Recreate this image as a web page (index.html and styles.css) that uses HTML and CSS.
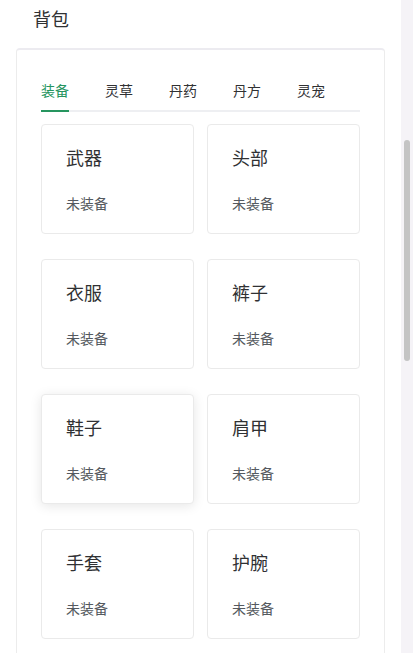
FILE: index.html
```html
<!DOCTYPE html>
<html lang="zh">
<head>
<meta charset="utf-8">
<title>背包</title>
<link rel="stylesheet" href="styles.css">
</head>
<body>
<div class="page">
  <main class="main">
    <h1 class="title">背包</h1>
    <section class="panel">
      <nav class="tabs">
        <span class="tab active">装备</span>
        <span class="tab">灵草</span>
        <span class="tab">丹药</span>
        <span class="tab">丹方</span>
        <span class="tab">灵宠</span>
      </nav>
      <div class="grid">
        <div class="card"><div class="card-name">武器</div><div class="card-state">未装备</div></div>
        <div class="card"><div class="card-name">头部</div><div class="card-state">未装备</div></div>
        <div class="card"><div class="card-name">衣服</div><div class="card-state">未装备</div></div>
        <div class="card"><div class="card-name">裤子</div><div class="card-state">未装备</div></div>
        <div class="card hover"><div class="card-name">鞋子</div><div class="card-state">未装备</div></div>
        <div class="card"><div class="card-name">肩甲</div><div class="card-state">未装备</div></div>
        <div class="card"><div class="card-name">手套</div><div class="card-state">未装备</div></div>
        <div class="card"><div class="card-name">护腕</div><div class="card-state">未装备</div></div>
      </div>
    </section>
  </main>
  <div class="scrollbar"><div class="thumb"></div></div>
</div>
</body>
</html>
```

FILE: styles.css
```css
html, body {
  margin: 0;
  padding: 0;
  height: 100%;
  overflow: hidden;
  background: #ffffff;
  font-family: "Noto Sans CJK SC", "Noto Sans", "Liberation Sans", sans-serif;
  color: #303133;
}

.page {
  display: flex;
  height: 653px;
  overflow: hidden;
}

.main {
  flex: 1;
  padding: 0 16px;
  min-width: 0;
}

.title {
  margin: 0;
  padding: 6px 0 0 17px;
  font-size: 18px;
  line-height: 24px;
  font-weight: 400;
  color: #303133;
}

.panel {
  margin-top: 18px;
  border: 1px solid #ececec;
  border-top: 2px solid #ecebf0;
  border-radius: 4px;
  padding: 20px 24px 60px;
  background: #fff;
}

.tabs {
  display: flex;
  gap: 36px;
  border-bottom: 2px solid #eeeff2;
}

.tab {
  font-size: 14px;
  line-height: 40px;
  height: 40px;
  margin-bottom: -2px;
  border-bottom: 2px solid transparent;
  color: #303133;
}

.tab.active {
  color: #26955f;
  border-bottom-color: #26955f;
}

.grid {
  margin-top: 12px;
  display: grid;
  grid-template-columns: 1fr 1fr;
  column-gap: 13px;
  row-gap: 25px;
}

.card {
  border: 1px solid #eaeaea;
  border-radius: 4px;
  padding: 20px 24px;
  background: #fff;
}

.card.hover {
  box-shadow: 0 2px 12px rgba(0, 0, 0, 0.1);
}

.card-name {
  font-size: 18px;
  line-height: 24px;
  color: #303133;
}

.card-state {
  margin-top: 24px;
  font-size: 14px;
  line-height: 20px;
  color: #555a60;
}

.scrollbar {
  width: 12px;
  flex: none;
  background: #f5f3f7;
}

.thumb {
  margin: 140px 0 0 3px;
  width: 6px;
  height: 221px;
  border-radius: 3px;
  background: #c4c4c4;
}
```
